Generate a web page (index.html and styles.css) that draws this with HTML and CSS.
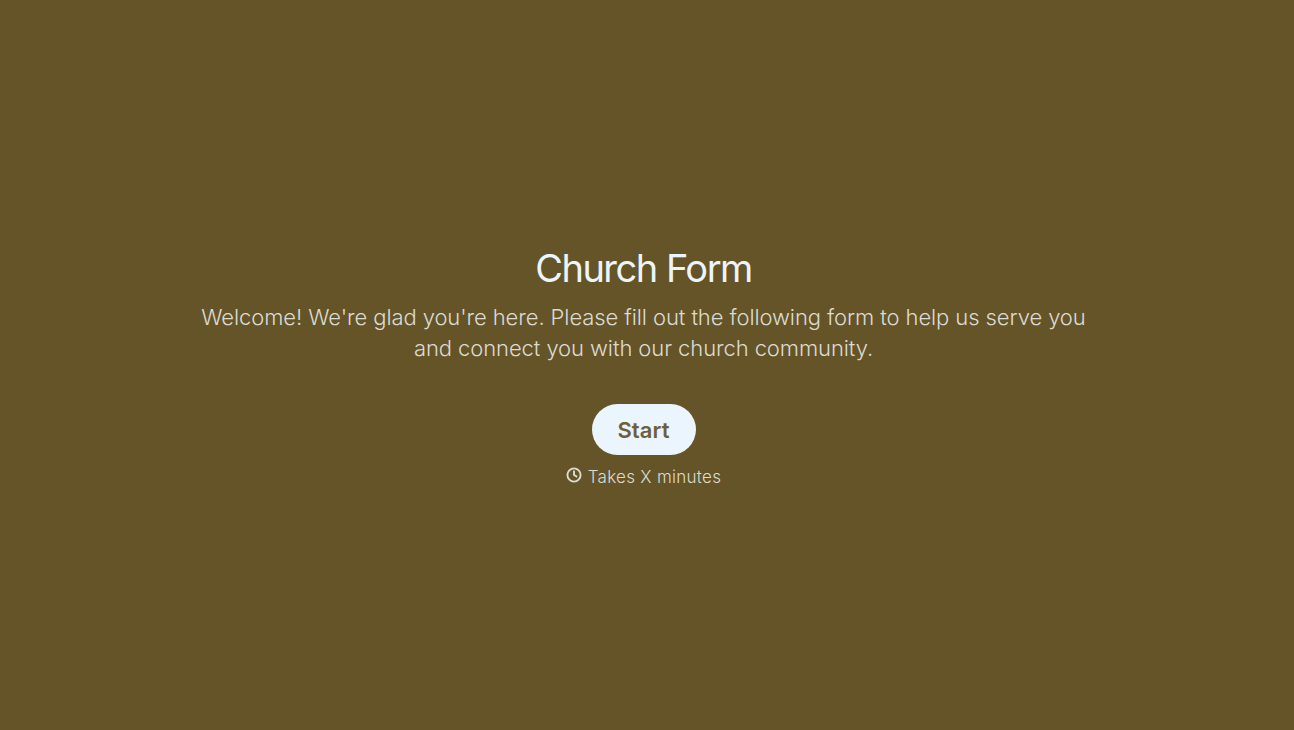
FILE: index.html
```html
<!DOCTYPE html>
<html lang="en">
<head>
<meta charset="utf-8">
<title>Church Form</title>
<link rel="stylesheet" href="styles.css">
</head>
<body>
<main class="welcome">
  <h1 class="title">Church Form</h1>
  <p class="intro">Welcome! We're glad you're here. Please fill out the following form to help us serve you and connect you with our church community.</p>
  <button class="start" type="button">Start</button>
  <div class="time">
    <svg class="clock" viewBox="0 0 16 16" width="16" height="16" fill="none" stroke="currentColor" stroke-width="1.9" stroke-linecap="round" stroke-linejoin="round"><circle cx="8" cy="8" r="6.6"/><path d="M8 4.2V8l2.4 1.4"/></svg>
    <span>Takes X minutes</span>
  </div>
</main>
</body>
</html>
```
FILE: styles.css
```css
html, body { margin: 0; height: 100%; }
body {
  background: #655428;
  font-family: Inter, "Liberation Sans", sans-serif;
}
.welcome {
  height: 730px;
  box-sizing: border-box;
  display: flex;
  flex-direction: column;
  align-items: center;
  padding: 244px 7px 0 0;
}
.title {
  margin: 0;
  font-size: 38px;
  line-height: 48px;
  font-weight: 400;
  letter-spacing: -1.5px;
  color: #ebf5fd;
}
.intro {
  margin: 10px 0 0;
  width: 900px;
  text-align: center;
  font-size: 22px;
  line-height: 31px;
  font-weight: 300;
  letter-spacing: -0.09px;
  color: #dcdbd2;
}
.start {
  margin-top: 40px;
  width: 104px;
  height: 51px;
  border: 0;
  border-radius: 26px;
  background: #ebf5fd;
  color: #6e6039;
  font: 600 22px Inter, "Liberation Sans", sans-serif;
  letter-spacing: 0.05px;
}
.time {
  margin-top: 10px;
  display: flex;
  align-items: center;
  gap: 6px;
  font-size: 17px;
  font-weight: 300;
  line-height: 24px;
  letter-spacing: 0.28px;
  color: #dcdbd2;
}
.clock { margin-top: -4px; }
```
